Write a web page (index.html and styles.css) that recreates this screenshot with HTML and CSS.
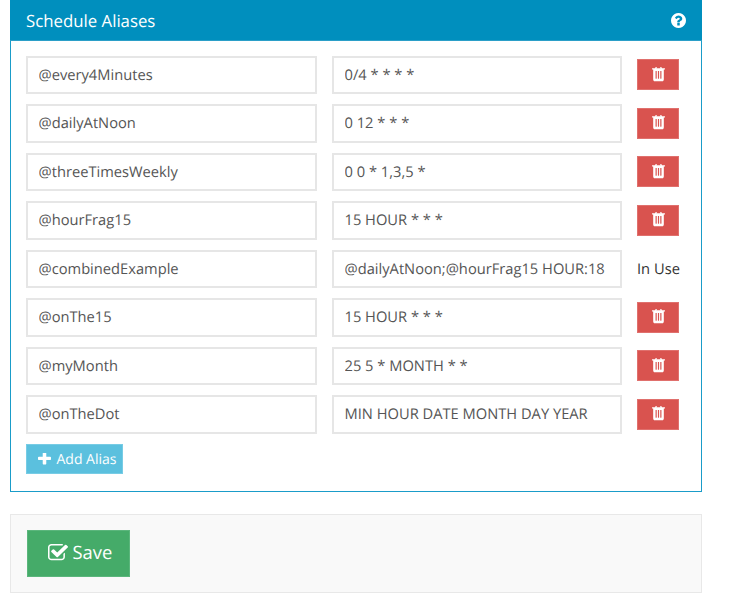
FILE: index.html
```html
<!DOCTYPE html>
<html lang="en">
<head>
<meta charset="utf-8">
<title>Schedule Aliases</title>
<link rel="stylesheet" href="styles.css">
</head>
<body>
<svg class="defs" aria-hidden="true">
  <symbol id="i-trash" viewBox="0 128 1408 1536" preserveAspectRatio="none"><path d="M512 1248v-704q0-14-9-23t-23-9h-64q-14 0-23 9t-9 23v704q0 14 9 23t23 9h64q14 0 23-9t9-23zm256 0v-704q0-14-9-23t-23-9h-64q-14 0-23 9t-9 23v704q0 14 9 23t23 9h64q14 0 23-9t9-23zm256 0v-704q0-14-9-23t-23-9h-64q-14 0-23 9t-9 23v704q0 14 9 23t23 9h64q14 0 23-9t9-23zm-544-992h448l-48-117q-7-9-17-11h-317q-10 2-17 11zm928 32v64q0 14-9 23t-23 9h-96v948q0 83-47 143.5t-113 60.5h-832q-66 0-113-58.5t-47-141.5v-952h-96q-14 0-23-9t-9-23v-64q0-14 9-23t23-9h309l70-167q15-37 54-63t79-26h320q40 0 79 26t54 63l70 167h309q14 0 23 9t9 23z"/></symbol>
  <symbol id="i-plus" viewBox="0 192 1408 1408" preserveAspectRatio="none"><path d="M1408 736v192q0 40-28 68t-68 28h-416v416q0 40-28 68t-68 28h-192q-40 0-68-28t-28-68v-416h-416q-40 0-68-28t-28-68v-192q0-40 28-68t68-28h416v-416q0-40 28-68t68-28h192q40 0 68 28t28 68v416h416q40 0 68 28t28 68z"/></symbol>
  <symbol id="i-help" viewBox="128 128 1536 1536"><path d="M1024 1376v-192q0-14-9-23t-23-9h-192q-14 0-23 9t-9 23v192q0 14 9 23t23 9h192q14 0 23-9t9-23zm256-672q0-88-55.5-163t-138.5-116-170-41q-243 0-371 213-15 24 8 42l132 100q7 6 19 6 16 0 25-12 53-68 86-92 34-24 86-24 48 0 85.5 26t37.5 59q0 38-20 61t-68 45q-63 28-115.5 86.5t-52.5 125.5v36q0 14 9 23t23 9h192q14 0 23-9t9-23q0-19 21.5-49.5t54.5-49.5q32-18 49-28.5t46-35 44.5-48 28-60.5 12.5-81zm384 192q0 209-103 385.5t-279.5 279.5-385.5 103-385.5-103-279.5-279.5-103-385.5 103-385.5 279.5-279.5 385.5-103 385.5 103 279.5 279.5 103 385.5z"/></symbol>
  <symbol id="i-check" viewBox="64 128 1664 1536" preserveAspectRatio="none"><path d="M1472 930v318q0 119-84.5 203.5t-203.5 84.5h-832q-119 0-203.5-84.5t-84.5-203.5v-832q0-119 84.5-203.5t203.5-84.5h832q63 0 117 25 15 7 18 23 3 17-9 29l-49 49q-10 10-23 10-3 0-9-2-23-6-45-6h-832q-66 0-113 47t-47 113v832q0 66 47 113t113 47h832q66 0 113-47t47-113v-254q0-13 9-22l64-64q10-10 23-10 6 0 12 3 20 8 20 29zm231-489l-814 814q-24 24-57 24t-57-24l-430-430q-24-24-24-57t24-57l110-110q24-24 57-24t57 24l263 263 647-647q24-24 57-24t57 24l110 110q24 24 24 57t-24 57z"/></symbol>
</svg>
<main class="page">
  <section class="panel">
    <header class="panel-head">
      <h3 class="panel-title">Schedule Aliases</h3>
      <svg class="help"><use href="#i-help"/></svg>
    </header>
    <div class="panel-body">
      <div class="row">
        <input class="field" type="text" value="@every4Minutes">
        <input class="field" type="text" value="0/4 * * * *">
        <button class="del" type="button"><svg class="trash"><use href="#i-trash"/></svg></button>
      </div>
      <div class="row">
        <input class="field" type="text" value="@dailyAtNoon">
        <input class="field" type="text" value="0 12 * * *">
        <button class="del" type="button"><svg class="trash"><use href="#i-trash"/></svg></button>
      </div>
      <div class="row">
        <input class="field" type="text" value="@threeTimesWeekly">
        <input class="field" type="text" value="0 0 * 1,3,5 *">
        <button class="del" type="button"><svg class="trash"><use href="#i-trash"/></svg></button>
      </div>
      <div class="row">
        <input class="field" type="text" value="@hourFrag15">
        <input class="field" type="text" value="15 HOUR * * *">
        <button class="del" type="button"><svg class="trash"><use href="#i-trash"/></svg></button>
      </div>
      <div class="row">
        <input class="field" type="text" value="@combinedExample">
        <input class="field" type="text" value="@dailyAtNoon;@hourFrag15 HOUR:18">
        <span class="in-use">In Use</span>
      </div>
      <div class="row">
        <input class="field" type="text" value="@onThe15">
        <input class="field" type="text" value="15 HOUR * * *">
        <button class="del" type="button"><svg class="trash"><use href="#i-trash"/></svg></button>
      </div>
      <div class="row">
        <input class="field" type="text" value="@myMonth">
        <input class="field" type="text" value="25 5 * MONTH * *">
        <button class="del" type="button"><svg class="trash"><use href="#i-trash"/></svg></button>
      </div>
      <div class="row">
        <input class="field" type="text" value="@onTheDot">
        <input class="field" type="text" value="MIN HOUR DATE MONTH DAY YEAR">
        <button class="del" type="button"><svg class="trash"><use href="#i-trash"/></svg></button>
      </div>
      <button class="add" type="button"><svg class="plus"><use href="#i-plus"/></svg>Add Alias</button>
    </div>
  </section>
  <div class="actions">
    <button class="save" type="button"><svg class="check"><use href="#i-check"/></svg>Save</button>
  </div>
</main>
</body>
</html>
```
FILE: styles.css
```css
* { box-sizing: border-box; }
html, body { margin: 0; padding: 0; background: #fff; }
body { font-family: "Open Sans", sans-serif; font-size: 14.7px; color: #333; overflow: hidden; text-rendering: geometricPrecision; }
.defs { display: none; }
.page { width: 692px; margin-left: 10px; }
.panel { border: 1px solid #1a9cc9; border-top: 0; height: 492px; }
.panel-head { height: 41px; margin: 0 -1px; background: #008fbe; border-bottom: 1px solid #2b9fc8; display: flex; align-items: center; justify-content: space-between; padding: 0 16.5px 0 16px; color: #fff; }
.panel-title { margin: 0; padding-top: 1px; font-size: 16.8px; font-weight: 400; line-height: 40px; }
.help { width: 15px; height: 15px; fill: #fff; }
.panel-body { padding: 14.5px 15px 0; }
.row { display: grid; grid-template-columns: 291px 290px 1fr; column-gap: 15px; height: 38.5px; margin-bottom: 10px; align-items: center; }
.field { width: 100%; height: 38.5px; border: 2px solid #e6e6e6; padding: 0 10.5px; font: 14.7px "Open Sans", sans-serif; color: #555; background: #fff; outline: 0; border-radius: 0; text-rendering: geometricPrecision; }
.del { width: 42px; height: 31px; background: #d9534f; border: 1px solid #e0706d; padding: 0; display: flex; align-items: center; justify-content: center; border-radius: 0; }
.trash { width: 13px; height: 15.6px; fill: #fff; }
.in-use { color: #333; }
.add { display: flex; align-items: center; width: 97px; height: 30.5px; background: #5bc0de; border: 1px solid #77cce5; color: #fff; font: 14px "Open Sans", sans-serif; padding: 1px 0 0 10.5px; border-radius: 0; text-rendering: geometricPrecision; }
.plus { width: 13px; height: 12px; margin-right: 6px; fill: #fff; }
.actions { margin-top: 21.5px; height: 79.5px; background: #f9f9f9; border: 1px solid #e8e8e8; padding: 15px 15.5px; }
.save { display: flex; align-items: center; width: 103px; height: 47px; background: #45ab69; border: 1px solid #5bb67c; color: #fff; font: 18.4px "Open Sans", sans-serif; padding: 0 0 1px 20px; border-radius: 0; text-rendering: geometricPrecision; }
.check { width: 20px; height: 17.7px; margin-right: 5px; fill: #fff; }
```
